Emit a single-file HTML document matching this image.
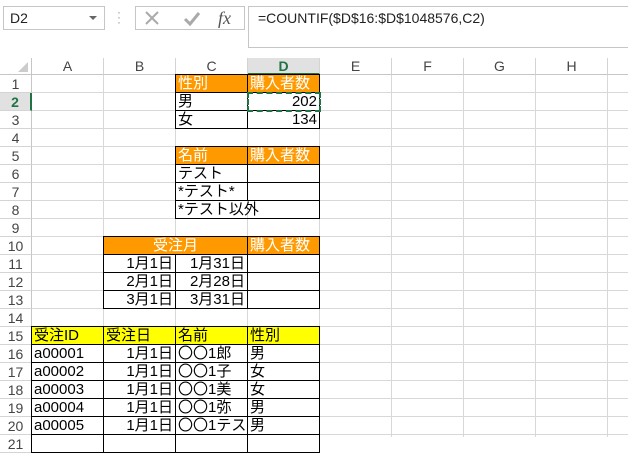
<!DOCTYPE html>
<html><head><meta charset="utf-8"><style>
*{margin:0;padding:0;box-sizing:border-box}
body{width:628px;height:437px;overflow:hidden;background:#fff;font-family:"Liberation Sans","Noto Sans CJK JP",sans-serif;position:relative}
.a{position:absolute}
.grid{left:32px;top:75px;width:596px;height:362px;
background-image:repeating-linear-gradient(to right,transparent 0 71px,#d8d8d8 71px 72px),repeating-linear-gradient(to bottom,transparent 0 17px,#d8d8d8 17px 18px)}
.ch{top:58px;height:17px;width:72px;text-align:center;font-size:14px;line-height:17px;color:#444;border-right:1px solid #d4d4d4;border-bottom:1px solid #c6c6c6}
.rh{left:0;width:32px;height:18px;text-align:center;font-size:14px;line-height:18px;color:#444;border-bottom:1px solid #d4d4d4;border-right:1px solid #c6c6c6}
.c{width:73px;height:19px;border:1px solid #000;font-size:15px;line-height:17px;padding:0 2px;white-space:nowrap;overflow:visible}
.o{background:#ff9900;color:#fff}
.y{background:#ffff00}
.r{text-align:right}
</style></head><body>
<!-- toolbar -->
<div class="a" style="left:3px;top:6px;width:102px;height:24px;border:1px solid #c6c6c6;font-size:14px;line-height:22px;padding-left:6px;color:#222">D2</div>
<div class="a" style="left:89px;top:16px;width:0;height:0;border-left:4px solid transparent;border-right:4px solid transparent;border-top:4px solid #666"></div>
<div class="a" style="left:117px;top:10px;font-size:12px;color:#999;line-height:5px">·<br>·<br>·</div>
<div class="a" style="left:135px;top:6px;width:110px;height:24px;border:1px solid #c6c6c6"></div>
<svg class="a" style="left:140px;top:8px" width="100" height="20"><path d="M6 4L18 16M18 4L6 16" stroke="#aaa" stroke-width="2"/><path d="M45 11l5 5 9-11" stroke="#aaa" stroke-width="3" fill="none"/><text x="78" y="16" font-family="Liberation Serif" font-style="italic" font-size="18" fill="#555">fx</text></svg>
<div class="a" style="left:248px;top:6px;width:390px;height:42px;border:1px solid #c6c6c6;font-size:14px;line-height:22px;padding-left:9px;color:#222">=COUNTIF($D$16:$D$1048576,C2)</div>
<!-- headers -->
<div class="a" style="left:0;top:58px;width:32px;height:17px;border-right:1px solid #c6c6c6;border-bottom:1px solid #c6c6c6"></div>
<div class="a" style="left:18px;top:62px;width:0;height:0;border-left:10px solid transparent;border-bottom:10px solid #ccc"></div>
<div class="a ch" style="left:32px">A</div>
<div class="a ch" style="left:104px">B</div>
<div class="a ch" style="left:176px">C</div>
<div class="a ch" style="left:248px;background:#e1e1e1;color:#217346;font-weight:bold;border-bottom:2px solid #217346">D</div>
<div class="a ch" style="left:320px">E</div>
<div class="a ch" style="left:392px">F</div>
<div class="a ch" style="left:464px">G</div>
<div class="a ch" style="left:536px">H</div>
<div class="a ch" style="left:608px">&nbsp;</div>
<div class="a grid"></div>
<div class="a rh" style="top:75px">1</div>
<div class="a rh" style="top:93px;background:#e1e1e1;color:#217346;font-weight:bold;border-right:2px solid #217346">2</div>
<div class="a rh" style="top:111px">3</div>
<div class="a rh" style="top:129px">4</div>
<div class="a rh" style="top:147px">5</div>
<div class="a rh" style="top:165px">6</div>
<div class="a rh" style="top:183px">7</div>
<div class="a rh" style="top:201px">8</div>
<div class="a rh" style="top:219px">9</div>
<div class="a rh" style="top:237px">10</div>
<div class="a rh" style="top:255px">11</div>
<div class="a rh" style="top:273px">12</div>
<div class="a rh" style="top:291px">13</div>
<div class="a rh" style="top:309px">14</div>
<div class="a rh" style="top:327px">15</div>
<div class="a rh" style="top:345px">16</div>
<div class="a rh" style="top:363px">17</div>
<div class="a rh" style="top:381px">18</div>
<div class="a rh" style="top:399px">19</div>
<div class="a rh" style="top:417px">20</div>
<div class="a rh" style="top:435px">21</div>
<!-- table 1 -->
<div class="a c o" style="left:175px;top:74px">性別</div>
<div class="a c o" style="left:247px;top:74px">購入者数</div>
<div class="a c" style="left:175px;top:92px">男</div>
<div class="a c r" style="left:247px;top:92px">202</div>
<div class="a c" style="left:175px;top:110px">女</div>
<div class="a c r" style="left:247px;top:110px">134</div>
<div class="a" style="left:247px;top:92px;width:74px;height:20px;border:2px dashed #217346"></div>
<!-- table 2 -->
<div class="a c o" style="left:175px;top:146px">名前</div>
<div class="a c o" style="left:247px;top:146px">購入者数</div>
<div class="a c" style="left:175px;top:164px">テスト</div>
<div class="a c" style="left:247px;top:164px"></div>
<div class="a c" style="left:175px;top:182px">*テスト*</div>
<div class="a c" style="left:247px;top:182px"></div>
<div class="a c" style="left:175px;top:200px;width:145px">*テスト以外</div>
<!-- table 3 -->
<div class="a c o" style="left:103px;top:236px;width:145px;text-align:center">受注月</div>
<div class="a c o" style="left:247px;top:236px">購入者数</div>
<div class="a c r" style="left:103px;top:254px">1月1日</div><div class="a c r" style="left:175px;top:254px">1月31日</div><div class="a c" style="left:247px;top:254px"></div>
<div class="a c r" style="left:103px;top:272px">2月1日</div><div class="a c r" style="left:175px;top:272px">2月28日</div><div class="a c" style="left:247px;top:272px"></div>
<div class="a c r" style="left:103px;top:290px">3月1日</div><div class="a c r" style="left:175px;top:290px">3月31日</div><div class="a c" style="left:247px;top:290px"></div>
<!-- table 4 -->
<div class="a c y" style="left:31px;top:326px">受注ID</div><div class="a c y" style="left:103px;top:326px">受注日</div><div class="a c y" style="left:175px;top:326px">名前</div><div class="a c y" style="left:247px;top:326px">性別</div>
<div class="a c" style="left:31px;top:344px">a00001</div><div class="a c r" style="left:103px;top:344px">1月1日</div><div class="a c" style="left:175px;top:344px">〇〇1郎</div><div class="a c" style="left:247px;top:344px">男</div>
<div class="a c" style="left:31px;top:362px">a00002</div><div class="a c r" style="left:103px;top:362px">1月1日</div><div class="a c" style="left:175px;top:362px">〇〇1子</div><div class="a c" style="left:247px;top:362px">女</div>
<div class="a c" style="left:31px;top:380px">a00003</div><div class="a c r" style="left:103px;top:380px">1月1日</div><div class="a c" style="left:175px;top:380px">〇〇1美</div><div class="a c" style="left:247px;top:380px">女</div>
<div class="a c" style="left:31px;top:398px">a00004</div><div class="a c r" style="left:103px;top:398px">1月1日</div><div class="a c" style="left:175px;top:398px">〇〇1弥</div><div class="a c" style="left:247px;top:398px">男</div>
<div class="a c" style="left:31px;top:416px">a00005</div><div class="a c r" style="left:103px;top:416px">1月1日</div><div class="a c" style="left:175px;top:416px;overflow:hidden">〇〇1テスト</div><div class="a c" style="left:247px;top:416px">男</div>
<div class="a c" style="left:31px;top:434px"></div><div class="a c" style="left:103px;top:434px"></div><div class="a c" style="left:175px;top:434px"></div><div class="a c" style="left:247px;top:434px"></div>
</body></html>
